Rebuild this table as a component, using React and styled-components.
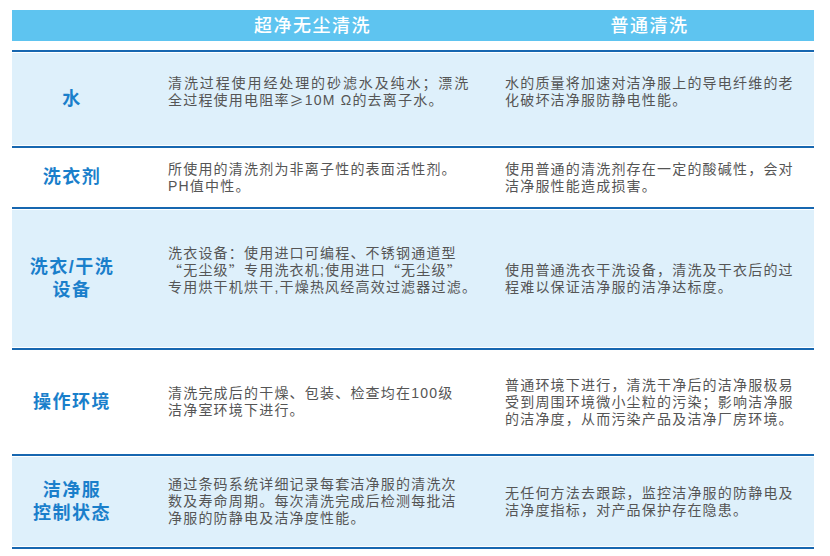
import React from "react";
import styled, { createGlobalStyle } from "styled-components";

const GlobalStyle = createGlobalStyle`
  body {
    margin: 0;
    background: #ffffff;
    font-family: "Liberation Sans", "Noto Sans CJK SC", sans-serif;
  }
`;

const Page = styled.div`
  width: 830px;
  height: 556px;
  padding: 10px 16px 0 12px;
  box-sizing: border-box;
`;

const Header = styled.div`
  display: grid;
  grid-template-columns: 120px 353px 1fr;
  height: 31px;
  background: #5ec4f0;
  margin-bottom: 9px;
`;

const HeaderCell = styled.div`
  display: flex;
  align-items: center;
  justify-content: center;
  padding-left: ${(p) => p.$shift || 0}px;
  color: #ffffff;
  font-size: 18px;
  font-weight: 500;
  line-height: 22px;
  letter-spacing: 1.5px;
`;

const Line = styled.div`
  height: 2px;
  background: #1767b0;
`;

const Row = styled.div`
  height: ${(p) => p.$h}px;
  padding: 1px 0;
  box-sizing: border-box;
`;

const RowBody = styled.div`
  display: grid;
  grid-template-columns: 120px 353px 1fr;
  height: 100%;
  background: ${(p) => (p.$light ? "#def0fb" : "#ffffff")};
`;

const Label = styled.div`
  display: flex;
  flex-direction: column;
  align-items: center;
  justify-content: center;
  color: #1a7fcb;
  font-size: 18px;
  font-weight: 700;
  line-height: 23px;
  letter-spacing: 1.5px;
  text-align: center;
`;

const TextCell = styled.div`
  display: flex;
  flex-direction: column;
  justify-content: center;
  padding-left: ${(p) => p.$pad}px;
  padding-bottom: ${(p) => p.$lift || 0}px;
  color: #555555;
  font-size: 14px;
  line-height: 17px;
  letter-spacing: 1.2px;
  white-space: nowrap;
`;

const TextLine = styled.div`
  height: 17px;
  letter-spacing: ${(p) => (p.$wide ? "1.9px" : "inherit")};
`;

/* full-width punctuation taken from the CJK face */
const Cjk = styled.span`
  display: inline-block;
  height: 17px;
  line-height: 17px;
  vertical-align: top;
  font-family: "Noto Sans CJK SC", sans-serif;
`;

const LabelLine = styled.div`
  height: 23px;
`;

const renderText = (text) =>
  text.split(/([“”≥])/).map((part, i) =>
    /^[“”≥]$/.test(part) ? <Cjk key={i}>{part}</Cjk> : part
  );

const rows = [
  {
    label: ["水"],
    h: 94,
    light: true,
    lift: [14, 14],
    mid: ["清洗过程使用经处理的砂滤水及纯水；漂洗", "全过程使用电阻率≥10M Ω的去离子水。"],
    wide: [0],
    right: ["水的质量将加速对洁净服上的导电纤维的老", "化破坏洁净服防静电性能。"],
  },
  {
    label: ["洗衣剂"],
    h: 59,
    lift: [0, 0],
    mid: ["所使用的清洗剂为非离子性的表面活性剂。", "PH值中性。"],
    right: ["使用普通的清洗剂存在一定的酸碱性，会对", "洁净服性能造成损害。"],
  },
  {
    label: ["洗衣/干洗", "设备"],
    h: 139,
    light: true,
    lift: [16, 0],
    mid: [
      "洗衣设备：使用进口可编程、不锈钢通道型",
      "“无尘级”专用洗衣机;使用进口“无尘级”",
      "专用烘干机烘干,干燥热风经高效过滤器过滤。",
    ],
    right: ["使用普通洗衣干洗设备，清洗及干衣后的过", "程难以保证洁净服的洁净达标度。"],
  },
  {
    label: ["操作环境"],
    h: 104,
    lift: [0, 0],
    mid: ["清洗完成后的干燥、包装、检查均在100级", "洁净室环境下进行。"],
    right: [
      "普通环境下进行，清洗干净后的洁净服极易",
      "受到周围环境微小尘粒的污染；影响洁净服",
      "的洁净度，从而污染产品及洁净厂房环境。",
    ],
  },
  {
    label: ["洁净服", "控制状态"],
    h: 91,
    light: true,
    lift: [0, 0],
    mid: [
      "通过条码系统详细记录每套洁净服的清洗次",
      "数及寿命周期。每次清洗完成后检测每批洁",
      "净服的防静电及洁净度性能。",
    ],
    right: ["无任何方法去跟踪，监控洁净服的防静电及", "洁净度指标，对产品保护存在隐患。"],
  },
];

export default function App() {
  return (
    <>
      <GlobalStyle />
      <Page>
        <Header>
          <div />
          <HeaderCell $shift={8}>超净无尘清洗</HeaderCell>
          <HeaderCell>普通清洗</HeaderCell>
        </Header>
        <Line />
        {rows.map((r) => (
          <React.Fragment key={r.label.join("")}>
            <Row $h={r.h}>
              <RowBody $light={r.light}>
                <Label>
                  {r.label.map((l) => (
                    <LabelLine key={l}>{l}</LabelLine>
                  ))}
                </Label>
                <TextCell $pad={36} $lift={r.lift[0]}>
                  {r.mid.map((l, i) => (
                    <TextLine key={l} $wide={r.wide && r.wide.includes(i)}>
                      {renderText(l)}
                    </TextLine>
                  ))}
                </TextCell>
                <TextCell $pad={20} $lift={r.lift[1]}>
                  {r.right.map((l) => (
                    <TextLine key={l}>{renderText(l)}</TextLine>
                  ))}
                </TextCell>
              </RowBody>
            </Row>
            <Line />
          </React.Fragment>
        ))}
      </Page>
    </>
  );
}
